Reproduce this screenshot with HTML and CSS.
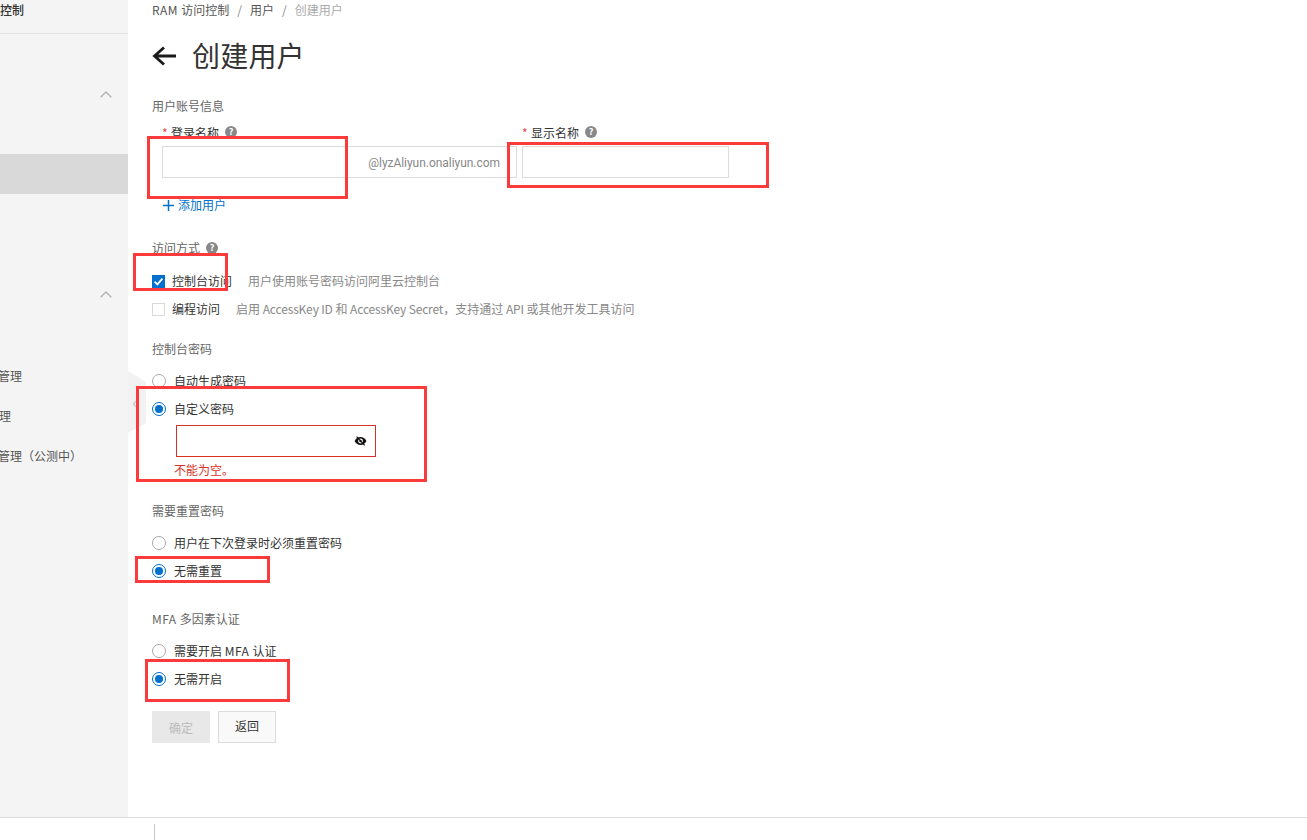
FILE: index.html
```html
<!DOCTYPE html>
<html lang="zh-CN">
<head>
<meta charset="utf-8">
<title>创建用户</title>
<link rel="stylesheet" href="styles.css">
</head>
<body>
<div class="shell">
  <div class="body">
    <aside class="sidebar">
      <div class="side-head">控制</div>
      <div class="side-group side-group-a">
        <svg class="chev" viewBox="0 0 12 7"><path d="M.7 6.3 6 1l5.300 5.300" /></svg>
      </div>
      <div class="side-selected"></div>
      <div class="side-group side-group-b">
        <svg class="chev" viewBox="0 0 12 7"><path d="M.7 6.3 6 1l5.300 5.300" /></svg>
      </div>
      <div class="side-item side-item-first">管理</div>
      <div class="side-item side-item-flush">理</div>
      <div class="side-item">管理（公测中）</div>
    </aside>
    <main class="main">
      <nav class="crumbs">
        <span><span class="wide">RAM </span>访问控制</span><span class="sep">/</span><span>用户</span><span class="sep">/</span><span class="crumb-current">创建用户</span>
      </nav>
      <h1 class="title">
        <svg class="back" viewBox="0 0 24 20"><path d="M24 10H3.500M12 1.500 2.500 10l9.500 8.500" /></svg>
        <span class="title-text">创建用户</span>
      </h1>

      <div class="section-label s-account">用户账号信息</div>
      <div class="fields">
        <div class="field">
          <label class="field-label"><i>*</i>登录名称<span class="help">?</span></label>
          <div class="input-group">
            <div class="input input-login"></div>
            <div class="addon">@lyzAliyun.onaliyun.com</div>
          </div>
        </div>
        <div class="field">
          <label class="field-label"><i>*</i>显示名称<span class="help">?</span></label>
          <div class="input input-display"></div>
        </div>
      </div>
      <div class="add-user"><svg class="plus" viewBox="0 0 11 11"><path d="M5.500 0v11M0 5.500h11" /></svg>添加用户</div>

      <div class="section-label s-access">访问方式<span class="help">?</span></div>
      <div class="options s-access-opts">
        <div class="option">
          <span class="check on"><svg viewBox="0 0 13 13"><path d="M2.600 6.700 5.400 9.400l5-5.800" /></svg></span>
          <span class="opt-check-text">控制台访问</span><span class="desc">用户使用账号密码访问阿里云控制台</span>
        </div>
        <div class="option">
          <span class="check"></span>
          <span class="opt-check-text">编程访问</span><span class="desc">启用 <span class="tight">AccessKey ID</span> 和 <span class="tight">AccessKey Secret</span>，支持通过 <span class="tight">API</span> 或其他开发工具访问</span>
        </div>
      </div>

      <div class="section-label s-pass">控制台密码</div>
      <div class="options">
        <div class="option"><span class="radio"></span>自动生成密码</div>
        <div class="option"><span class="radio on"></span>自定义密码</div>
      </div>
      <div class="input-error">
        <svg class="eye" viewBox="0 0 14 12"><path class="eye-fill" d="M7 1.700C4 1.700 1.700 3.700.6 6c1.100 2.300 3.400 4.300 6.400 4.300s5.300-2 6.400-4.300C12.300 3.700 10 1.700 7 1.700Z"/><circle class="eye-hole" cx="7" cy="6" r="2.600"/><circle class="eye-fill" cx="7" cy="6" r="1.300"/><path class="eye-slash" d="M2.800 1.200 11.500 10.800"/></svg>
      </div>
      <div class="error-text">不能为空。</div>

      <div class="section-label s-reset">需要重置密码</div>
      <div class="options">
        <div class="option"><span class="radio"></span>用户在下次登录时必须重置密码</div>
        <div class="option"><span class="radio on"></span>无需重置</div>
      </div>

      <div class="section-label s-mfa"><span class="wide">MFA </span>多因素认证</div>
      <div class="options">
        <div class="option"><span class="radio"></span>需要开启 <span class="wide">MFA </span>认证</div>
        <div class="option"><span class="radio on"></span>无需开启</div>
      </div>

      <div class="actions">
        <button class="btn btn-disabled" type="button">确定</button>
        <button class="btn btn-normal" type="button">返回</button>
      </div>
    </main>
  </div>
  <footer class="footer"><span class="footer-line"></span></footer>

  <div class="collapse-handle"><svg viewBox="0 0 18 62"><polygon class="handle-shape" points="0,0 18,11 18,52 0,62"/><path class="handle-arrow" d="M8 30 5.500 33 8 36"/></svg></div>

  <div class="mark mark-1"></div>
  <div class="mark mark-2"></div>
  <div class="mark mark-3"></div>
  <div class="mark mark-4"></div>
  <div class="mark mark-5"></div>
  <div class="mark mark-6"></div>
</div>
</body>
</html>
```
FILE: styles.css
```css
* { box-sizing: border-box; }
html, body { margin: 0; padding: 0; height: 100%; background: #fff; overflow: hidden; }
body { font-family: "Noto Sans CJK SC", Roboto, "Liberation Sans", sans-serif; font-size: 12px; color: #333; }

.shell { position: relative; height: 840px; display: flex; flex-direction: column; }
.body { flex: none; height: 817px; display: flex; }

.wide { letter-spacing: .5px; white-space: pre; }
.tight { letter-spacing: -.16px; }

/* sidebar */
.sidebar { flex: none; width: 128px; background: #f4f4f4; overflow: hidden; }
.side-head { height: 34px; line-height: 20px; border-bottom: 1px solid #e4e4e4; font-weight: 500; font-size: 12px; color: #333; }
.side-group { display: flex; justify-content: flex-end; padding-right: 16px; }
.side-group-a { height: 120px; padding-top: 57px; }
.side-selected { height: 40px; background: #d9d9d9; }
.side-group-b { height: 162px; padding-top: 97px; }
.chev { width: 12px; height: 7px; fill: none; stroke: #b3b3b3; stroke-width: 1.400; }
.side-item { height: 40px; line-height: 40px; color: #555; white-space: nowrap; margin-left: -2px; }
.side-item-flush { margin-left: -1px; }

/* main */
.main { flex: 1; min-width: 0; padding-left: 24px; }
.crumbs { height: 20px; line-height: 20px; color: #555; display: flex; }
.sep { margin: 0 8px; color: #888; }
.crumb-current { color: #aaa; }
.title { margin: 16px 0 0; height: 40px; display: flex; align-items: center; font-size: 28px; font-weight: 400; line-height: 40px; color: #333; }
.title-text { padding-bottom: 2px; letter-spacing: .2px; }
.back { width: 24px; height: 20px; margin-right: 16px; fill: none; stroke: #1a1a1a; stroke-width: 2.800; }

.section-label { height: 20px; line-height: 20px; color: #666; display: flex; align-items: center; }
.s-account { margin-top: 20px; }
.s-access { margin-top: 23px; }
.s-pass { margin-top: 16px; }
.s-reset { margin-top: 21px; }
.s-mfa { margin-top: 24px; }

.fields { display: flex; gap: 5px; margin: 6px 0 0 10px; }
.field-label { display: flex; align-items: center; height: 20px; color: #333; }
.field-label i { color: #e0474c; font-style: normal; width: 9px; }
.help { display: inline-flex; align-items: center; justify-content: center; width: 12px; height: 12px; margin-left: 6px; border-radius: 50%; background: #888; color: #fff; font-size: 9px; font-weight: 700; line-height: 12px; }
.input-group { display: flex; height: 32px; margin-top: 4px; width: 355px; border: 1px solid #dcdcdc; }
.input-login { width: 185px; border: 0; border-right: 1px solid #dcdcdc; }
.addon { flex: 1; display: flex; align-items: center; justify-content: flex-end; padding: 2px 16px 0 0; color: #888; font-family: Roboto, "Liberation Sans", sans-serif; letter-spacing: -.04px; }
.input { height: 32px; }
.input-display { width: 207px; margin-top: 4px; border: 1px solid #dcdcdc; }
.input-group .input { height: 30px; margin: 0; }

.add-user { margin: 17px 0 0 11px; height: 20px; line-height: 20px; color: #0070cc; display: flex; align-items: center; }
.plus { width: 11px; height: 11px; margin-right: 4px; fill: none; stroke: #0070cc; stroke-width: 1.500; }

.options { margin-top: 8px; }
.s-access-opts { margin-top: 9px; }
.option { height: 28px; padding-bottom: 2px; display: flex; align-items: center; color: #333; white-space: pre; }
.opt-check-text { margin-right: 16px; }
.desc { color: #888; }

.check { width: 13px; height: 13px; margin: 2px 7px 0 0; border: 1px solid #d9d9d9; background: #fff; display: flex; }
.check.on { background: #0070cc; border-color: #0070cc; }
.check svg { flex: none; width: 13px; height: 13px; margin: -1px; fill: none; stroke: #fff; stroke-width: 1.800; }

.radio { width: 14px; height: 14px; margin: 2px 8px 0 0; border: 1px solid #aaa; border-radius: 50%; background: #fff; display: flex; align-items: center; justify-content: center; }
.radio.on { border-color: #0070cc; }
.radio.on::after { content: ""; width: 8px; height: 8px; border-radius: 50%; background: #0070cc; }

.input-error { width: 200px; height: 32px; margin: 2px 0 0 24px; border: 1px solid #d93026; display: flex; align-items: center; justify-content: flex-end; padding-right: 8px; }
.eye { width: 13px; height: 12px; }
.eye-fill { fill: #111; }
.eye-hole { fill: #fff; }
.eye-slash { stroke: #111; stroke-width: 1.200; fill: none; }
.error-text { margin: 3px 0 0 22px; height: 20px; line-height: 20px; color: #d93026; }

.actions { display: flex; gap: 8px; margin-top: 18px; }
.btn { width: 58px; height: 32px; padding: 0; font: inherit; border-radius: 0; }
.btn-disabled { background: #e8e8e8; border: 1px solid #e8e8e8; color: #bbb; }
.btn-normal { background: #f9f9f9; border: 1px solid #dcdcdc; color: #333; padding-bottom: 4px; }

/* footer */
.footer { flex: 1; border-top: 1px solid #dcdcdc; padding: 6px 0 0 154px; display: flex; }
.footer-line { width: 1px; height: 16px; background: #c8c8c8; }

/* overlays */
.collapse-handle { position: absolute; left: 128px; top: 371px; width: 18px; height: 62px; }
.collapse-handle svg { display: block; width: 100%; height: 100%; }
.handle-shape { fill: #f2f2f2; }
.handle-arrow { fill: none; stroke: #ccc; stroke-width: 1.500; }

.mark { position: absolute; border: 3px solid #fb3b3b; }
.mark-1 { left: 147px; top: 136px; width: 201px; height: 63px; }
.mark-2 { left: 507px; top: 142px; width: 262px; height: 46px; }
.mark-3 { left: 133px; top: 253px; width: 95px; height: 38px; }
.mark-4 { left: 136px; top: 386px; width: 291px; height: 96px; }
.mark-5 { left: 135px; top: 556px; width: 135px; height: 27px; }
.mark-6 { left: 145px; top: 659px; width: 145px; height: 43px; }
```
